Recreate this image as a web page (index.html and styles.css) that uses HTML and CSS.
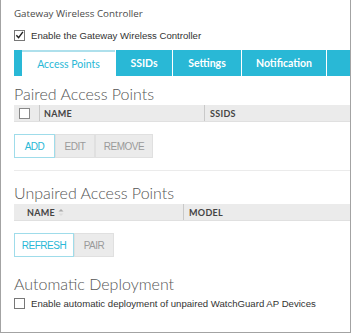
FILE: index.html
```html
<!DOCTYPE html>
<html>
<head>
<meta charset="utf-8">
<link rel="stylesheet" href="styles.css">
</head>
<body>
<div class="frame">
  <div class="title">Gateway Wireless Controller</div>
  <label class="check-row enable-row"><span class="box checked"><svg width="10" height="10" viewBox="0 0 10 10"><path d="M1.5 5.2 L4 8 L8.8 1.5" fill="none" stroke="#222" stroke-width="1.6"/></svg></span>Enable the Gateway Wireless Controller</label>
  <div class="tabs">
    <div class="tab-lead"></div>
    <div class="tab active">Access Points</div>
    <div class="tab t-ssids">SSIDs</div>
    <div class="tab t-settings">Settings</div>
    <div class="tab t-notif">Notification</div>
    <div class="tab t-more"></div>
  </div>
  <h2 class="heading h-paired">Paired Access Points</h2>
  <div class="thead">
    <div class="th th-check"><span class="box small"></span></div>
    <div class="th th-name">NAME</div>
    <div class="th th-ssids">SSIDS</div>
  </div>
  <div class="btns">
    <div class="btn primary b-add">ADD</div>
    <div class="btn b-edit">EDIT</div>
    <div class="btn b-remove">REMOVE</div>
  </div>
  <div class="sep"></div>
  <h2 class="heading h-unpaired">Unpaired Access Points</h2>
  <div class="thead">
    <div class="th th-name2">NAME <svg class="sort" width="6" height="9" viewBox="0 0 6 9"><path d="M0.5 3.5 L3 1 L5.5 3.5 Z" fill="#aaa"/><path d="M0.5 5.5 L3 8 L5.5 5.5 Z" fill="#ddd"/></svg></div>
    <div class="th th-model">MODEL</div>
  </div>
  <div class="btns">
    <div class="btn primary b-refresh">REFRESH</div>
    <div class="btn b-pair">PAIR</div>
  </div>
  <h2 class="heading h-auto">Automatic Deployment</h2>
  <label class="check-row auto-row"><span class="box"></span>Enable automatic deployment of unpaired WatchGuard AP Devices</label>
</div>
</body>
</html>
```
FILE: styles.css
```css
html, body {
  margin: 0;
  padding: 0;
  background: #fff;
}
.frame {
  width: 351px;
  height: 333px;
  box-sizing: border-box;
  border: 1px solid #a3a3a3;
  border-top: none;
  padding: 7px 0 0 13px;
  overflow: hidden;
  font-family: "Lato", "Open Sans", sans-serif;
  color: #444;
}
.title {
  font-family: "Open Sans", sans-serif;
  font-size: 9.8px;
  line-height: 14px;
  height: 14px;
  color: #4a4a4a;
}
.check-row {
  display: flex;
  align-items: center;
  gap: 6px;
  font-family: "Liberation Sans", Arial, sans-serif;
  font-size: 9.6px;
  color: #333;
  height: 14px;
  white-space: nowrap;
}
.enable-row {
  margin-top: 7px;
}
.box {
  display: inline-flex;
  align-items: center;
  justify-content: center;
  width: 9px;
  height: 9px;
  border: 1px solid #777;
  background: #fff;
  flex: none;
}
.box.small {
  border-color: #888;
}
.tabs {
  display: flex;
  height: 26px;
  margin-top: 8px;
  gap: 1px;
}
.tab-lead {
  width: 8px;
  background: #29b8d6;
  margin-right: -1px;
}
.tab {
  background: #29b8d6;
  color: #fff;
  font-family: "Lato", sans-serif;
  font-weight: 700;
  font-size: 10.5px;
  display: flex;
  align-items: center;
  justify-content: center;
  box-sizing: border-box;
}
.tab.active {
  background: #fff;
  color: #29b8d6;
  font-weight: 400;
  border-top: 2px solid #aee0ec;
  width: 93px;
}
.t-ssids { width: 56px; }
.t-settings { width: 68px; }
.t-notif { width: 84px; }
.t-more { flex: 1; }
.heading {
  margin: 0;
  font-family: "Lato", sans-serif;
  font-weight: 300;
  font-size: 16px;
  line-height: 20px;
  color: #555;
}
.h-paired { margin-top: 8px; }
.thead {
  display: flex;
  height: 16px;
  background: #ebebeb;
  border-bottom: 1px solid #e0e0e0;
  margin-top: 1px;
  font-family: "Lato", sans-serif;
  font-weight: 700;
  font-size: 9px;
  color: #444;
  letter-spacing: 0.3px;
}
.th {
  display: flex;
  align-items: center;
  box-sizing: border-box;
}
.th-check {
  width: 26px;
  padding-left: 5px;
  border-right: 1px solid #c9c9c9;
}
.th-name {
  width: 165px;
  padding-left: 4px;
  border-right: 1px solid #c9c9c9;
}
.th-ssids {
  padding-left: 5px;
}
.th-name2 {
  width: 170px;
  padding-left: 13px;
  border-right: 1px solid #c9c9c9;
  gap: 3px;
}
.th-model {
  padding-left: 5px;
}
.btns {
  display: flex;
  margin-top: 12px;
  height: 24px;
}
.btn {
  display: flex;
  align-items: center;
  justify-content: center;
  box-sizing: border-box;
  background: #ebebeb;
  border: 1px solid #e0e0e0;
  color: #9a9a9a;
  font-family: "Liberation Sans", Arial, sans-serif;
  font-size: 10px;
  letter-spacing: -0.5px;
}
.btn.primary {
  background: #fff;
  border-color: #9fdcea;
  color: #29b8d6;
}
.b-add { width: 41px; }
.b-edit { width: 40px; }
.b-remove { width: 58px; }
.b-refresh { width: 60px; }
.b-pair { width: 40px; }
.sep {
  height: 1px;
  background: #ebebeb;
  margin-top: 12px;
}
.h-unpaired { margin-top: 12px; }
.h-auto { margin-top: 17px; }
.auto-row {
  margin-top: 2px;
}
```
